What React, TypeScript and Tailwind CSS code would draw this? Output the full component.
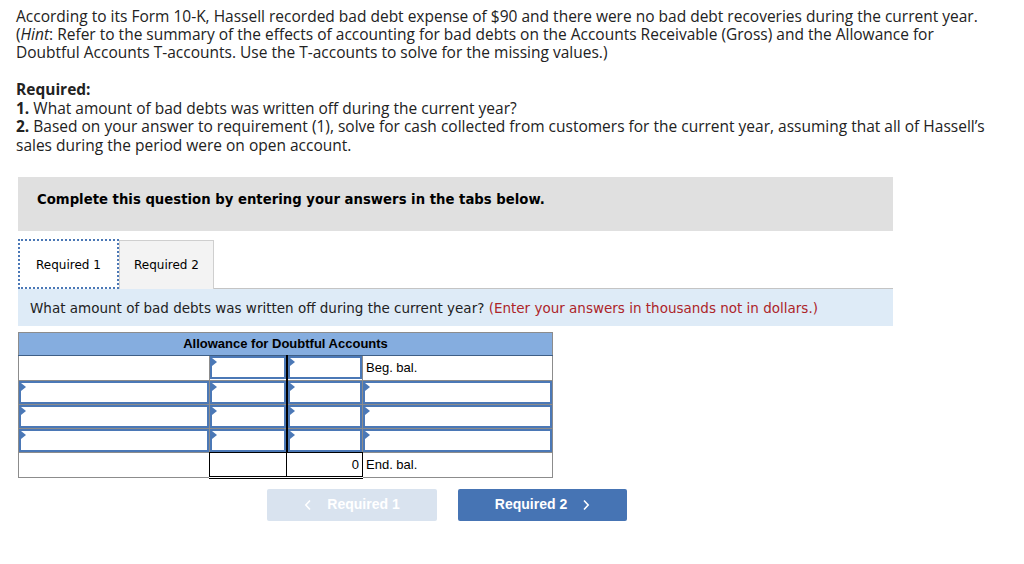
import React from "react";

const inputBlue = "border-[#4b78b6]";

function Marker() {
  return (
    <span className="absolute left-0 top-0 h-0 w-0 border-y-[4px] border-l-[5px] border-y-transparent border-l-[#4b78b6]" />
  );
}

// an answer box inside a T-account cell
function InputCell({ className = "" }: { className?: string }) {
  return (
    <td className={`border border-[#8c8c8c] p-0 ${className}`}>
      <div className={`relative h-[23px] border-2 ${inputBlue} bg-white`}>
        <Marker />
      </div>
    </td>
  );
}

function Chevron({ dir }: { dir: "left" | "right" }) {
  return (
    <svg width="8" height="12" viewBox="0 0 8 12" fill="none" stroke="currentColor" strokeWidth="1.6">
      {dir === "left" ? <polyline points="6,1.5 1.8,6 6,10.5" /> : <polyline points="2,1.5 6.2,6 2,10.5" />}
    </svg>
  );
}

export default function App() {
  const sans = { fontFamily: "'Open Sans', 'Liberation Sans', sans-serif" };
  const verdana = { fontFamily: "'DejaVu Sans', Verdana, sans-serif" };
  const arial = { fontFamily: "'Liberation Sans', Arial, sans-serif" };

  return (
    <div className="h-[564px] w-[1024px] overflow-hidden bg-white text-[#222]">
      <div className="whitespace-nowrap pl-4 pt-[7px] text-[15.5px] leading-[18px]" style={sans}>
        <p>
          According to its Form 10-K, Hassell recorded bad debt expense of $90 and there were no bad debt recoveries
          during the current year.
          <br />(<i>Hint</i>: Refer to the summary of the effects of accounting for bad debts on the Accounts Receivable
          (Gross) and the Allowance for
          <br />
          Doubtful Accounts T-accounts. Use the T-accounts to solve for the missing values.)
        </p>
        <div className="mt-[19px] leading-[18.7px]">
          <p className="font-bold">Required:</p>
          <p>
            <b>1.</b> What amount of bad debts was written off during the current year?
          </p>
          <p>
            <b>2.</b> Based on your answer to requirement (1), solve for cash collected from customers for the current
            year, assuming that all of Hassell’s
            <br />
            sales during the period were on open account.
          </p>
        </div>
      </div>

      <div className="ml-[18px] mt-[22px] w-[875px]">
        <div className="h-[54px] bg-[#e0e0e0] pl-[19px] pt-[15px] text-[13.25px] font-bold leading-4 text-black" style={verdana}>
          Complete this question by entering your answers in the tabs below.
        </div>

        <div className="mt-2 flex h-[50px] items-end" style={verdana}>
          <div className="flex h-[50px] w-[101px] items-center justify-center border-2 border-dotted border-[#4b78b6] bg-white pt-[2px] text-[12px] text-black">
            Required 1
          </div>
          <div className="flex h-[49px] w-[95px] items-center justify-center border border-b-0 border-[#cfcfcf] bg-[#f3f3f3] pt-[1px] text-[12px] text-black">
            Required 2
          </div>
          <div className="h-px flex-1 bg-[#c4c4c4]" />
        </div>

        <div className="flex h-[37px] items-center bg-[#deebf7] pl-3 pt-px text-[13.5px] text-[#222]" style={verdana}>
          <span>
            What amount of bad debts was written off during the current year?{" "}
            <span className="text-[#ad2529]">(Enter your answers in thousands not in dollars.)</span>
          </span>
        </div>

        <table className="mt-[6px] w-[534px] table-fixed border-collapse text-[13px] text-black" style={arial}>
          <colgroup>
            <col className="w-[191px]" />
            <col className="w-[77px]" />
            <col className="w-[76px]" />
            <col className="w-[190px]" />
          </colgroup>
          <thead>
            <tr>
              <th
                colSpan={4}
                className="h-[23px] border border-[#8c8c8c] border-b-[#3f5f86] bg-[#85addf] p-0 text-center text-[13px] font-bold"
              >
                Allowance for Doubtful Accounts
              </th>
            </tr>
          </thead>
          <tbody>
            <tr>
              <td className="h-[25px] border border-[#8c8c8c] p-0" />
              <InputCell className="border-r-2 border-r-black" />
              <InputCell />
              <td className="border border-[#8c8c8c] px-[3px] py-0 align-middle">Beg. bal.</td>
            </tr>
            {[0, 1, 2].map((i) => (
              <tr key={i}>
                <InputCell />
                <InputCell className="border-r-2 border-r-black" />
                <InputCell />
                <InputCell />
              </tr>
            ))}
            <tr>
              <td className="h-[25px] border border-[#8c8c8c] border-r-black border-t-black p-0" />
              <td className="border border-b-[3px] border-double border-black p-0" />
              <td className="border border-b-[3px] border-double border-black px-[3px] py-0 text-right">0</td>
              <td className="border border-[#8c8c8c] border-t-black border-l-black px-[3px] py-0">End. bal.</td>
            </tr>
          </tbody>
        </table>

        <div className="ml-[249px] mt-[10px] flex gap-[21px] text-[14px] font-bold text-white" style={arial}>
          <div className="flex h-[32px] w-[170px] items-center justify-center gap-[15px] rounded-[2px] bg-[#d9e3ef]">
            <Chevron dir="left" />
            <span>Required 1</span>
          </div>
          <div className="flex h-[32px] w-[169px] items-center justify-center gap-[15px] rounded-[2px] bg-[#4674b4]">
            <span>Required 2</span>
            <Chevron dir="right" />
          </div>
        </div>
      </div>
    </div>
  );
}
